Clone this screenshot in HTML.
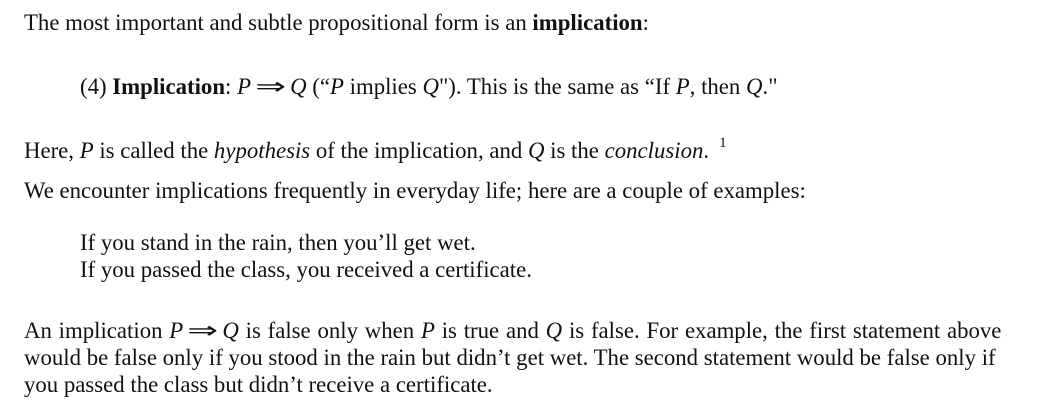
<!DOCTYPE html>
<html><head><meta charset="utf-8"><style>
body{margin:0;width:1060px;height:419px;background:#fff;overflow:hidden;font-family:"Liberation Serif",serif;font-size:22.8px;color:#111;}
.l{position:absolute;white-space:nowrap;line-height:1;}
i{font-style:italic}
.arr{display:inline-block;transform:scaleX(1.6);margin:0 10px;font-style:normal}
sup{font-size:15px;position:relative;top:-4px;vertical-align:top;margin-left:10px}
</style></head><body>
<div class="l" style="left:24px;top:12px">The most important and subtle propositional form is an <b>implication</b>:</div>
<div class="l" style="left:80px;top:76px">(4) <b>Implication</b>: <i>P</i><span class="arr">⇒</span><i>Q</i> (“<i>P</i> implies <i>Q</i>"). This is the same as “If <i>P</i>, then <i>Q</i>."</div>
<div class="l" style="left:24px;top:140px">Here, <i>P</i> is called the <i>hypothesis</i> of the implication, and <i>Q</i> is the <i>conclusion</i>.<sup>1</sup></div>
<div class="l" style="left:24px;top:180px">We encounter implications frequently in everyday life; here are a couple of examples:</div>
<div class="l" style="left:80px;top:232px">If you stand in the rain, then you’ll get wet.</div>
<div class="l" style="left:80px;top:259px">If you passed the class, you received a certificate.</div>
<div class="l" style="left:24px;top:320px;word-spacing:1.1px">An implication <i>P</i><span class="arr">⇒</span><i>Q</i> is false only when <i>P</i> is true and <i>Q</i> is false. For example, the first statement above</div>
<div class="l" style="left:24px;top:347px">would be false only if you stood in the rain but didn’t get wet. The second statement would be false only if</div>
<div class="l" style="left:24px;top:374px">you passed the class but didn’t receive a certificate.</div>
</body></html>
